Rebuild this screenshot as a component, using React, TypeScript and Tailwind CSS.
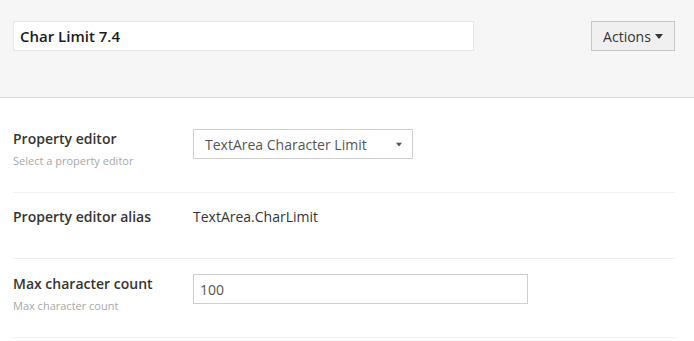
const font = { fontFamily: '"Open Sans", "Liberation Sans", sans-serif' };

function Caret({ className = "" }: { className?: string }) {
  return (
    <svg width="8" height="5" viewBox="0 0 8 5" className={className}>
      <path d="M0 0h8L4 5z" fill="currentColor" />
    </svg>
  );
}

export default function App() {
  return (
    <div style={font} className="w-[694px] h-[341px] bg-white overflow-hidden text-[#343434]">
      {/* Header */}
      <div className="h-[98px] bg-[#f6f6f6] border-b border-[#d8d8d8] pl-[13px] pr-[19px] pt-[21px] flex items-start justify-between">
        <div className="w-[461px] h-[30px] bg-white border border-[#e6e6e6] flex items-center px-[6px] text-[15px] font-semibold text-[#1b1b1b]">
          Char Limit 7.4
        </div>
        <button className="w-[84px] h-[30px] bg-[#f0f0f0] border border-[#c8c8c8] flex items-center justify-center gap-[4px] text-[14px] text-[#343434]">
          Actions
          <Caret className="text-[#343434]" />
        </button>
      </div>

      <div className="pl-[13px] pr-[19px] pt-[16px]">
        {/* Property editor */}
        <div className="flex pt-[15px] pb-[23px] border-b border-[#f0f0f0]">
          <div className="w-[180px] shrink-0">
            <div className="text-[14px] leading-5 font-semibold">Property editor</div>
            <div className="text-[11px] leading-4 mt-[4px] text-[#a7a7a7]">Select a property editor</div>
          </div>
          <div className="w-[220px] h-[30px] border border-[#cfcfcf] bg-white flex items-center justify-between pl-[11px] pr-[9px] text-[14px] text-[#555]">
            TextArea Character Limit
            <Caret className="text-[#555] scale-[0.8]" />
          </div>
        </div>

        {/* Alias */}
        <div className="flex pt-[14px] pb-[31px] border-b border-[#f0f0f0]">
          <div className="w-[180px] shrink-0 text-[14px] leading-5 font-semibold">Property editor alias</div>
          <div className="text-[14px] leading-5 text-[#343434]">TextArea.CharLimit</div>
        </div>

        {/* Max chars */}
        <div className="flex pt-[15px] pb-[23px] border-b border-[#f0f0f0]">
          <div className="w-[180px] shrink-0">
            <div className="text-[14px] leading-5 font-semibold">Max character count</div>
            <div className="text-[11px] leading-4 mt-[4px] text-[#a7a7a7]">Max character count</div>
          </div>
          <div className="w-[335px] h-[30px] border border-[#cfcfcf] bg-white flex items-center px-[6px] text-[14px] text-[#555]">
            100
          </div>
        </div>
      </div>
    </div>
  );
}
